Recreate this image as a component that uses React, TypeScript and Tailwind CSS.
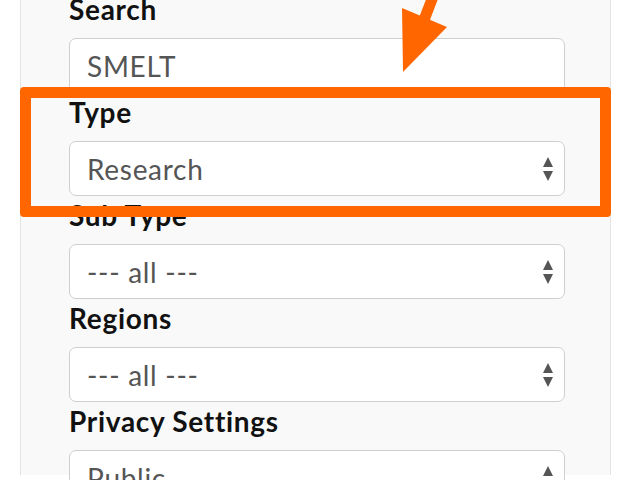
import React from "react";

function Arrows() {
  return (
    <svg width="12" height="26" viewBox="0 0 12 26" className="absolute right-[10px] top-1/2 -translate-y-1/2">
      <polygon points="6,1 11,11 1,11" fill="#555" />
      <polygon points="1,15 11,15 6,25" fill="#555" />
    </svg>
  );
}

function Field({ label, value, select = true, first = false }: { label: string; value: string; select?: boolean; first?: boolean }) {
  return (
    <div className={first ? "" : "mt-[5px]"}>
      <div className="text-[28px] leading-[29px] tracking-[0.7px] font-bold text-[#111] mb-[14px]">{label}</div>
      <div className="relative w-[496px] h-[55px] rounded-[7px] border border-[#cfcfcf] bg-white flex items-center pl-[17px] text-[28px] tracking-[0.7px] text-[#555]">
        {value}
        {select && <Arrows />}
      </div>
    </div>
  );
}

export default function App() {
  return (
    <div className="relative w-[640px] h-[480px] overflow-hidden bg-white font-['Lato','Noto_Sans',sans-serif]">
      <div className="ml-[20px] w-[591px] h-full border-x border-[#e4e4e4] bg-[#f9f9f9] pl-[48px]">
        <div className="-mt-[5px]">
          <Field label="Search" value="SMELT" select={false} first />
          <Field label="Type" value="Research" />
          <Field label="Sub Type" value="--- all ---" />
          <Field label="Regions" value="--- all ---" />
          <Field label="Privacy Settings" value="Public" />
        </div>
      </div>
      <div className="absolute left-[20px] top-[87px] w-[591px] h-[130px] border-[11px] border-[#ff6600] rounded-[4px]" />
      <svg className="absolute left-0 top-0" width="640" height="100" viewBox="0 0 640 100">
        <line x1="424" y1="20" x2="434" y2="-6" stroke="#ff6600" strokeWidth="11" />
        <polygon points="403,72 402,8 447,27" fill="#ff6600" />
      </svg>
    </div>
  );
}
